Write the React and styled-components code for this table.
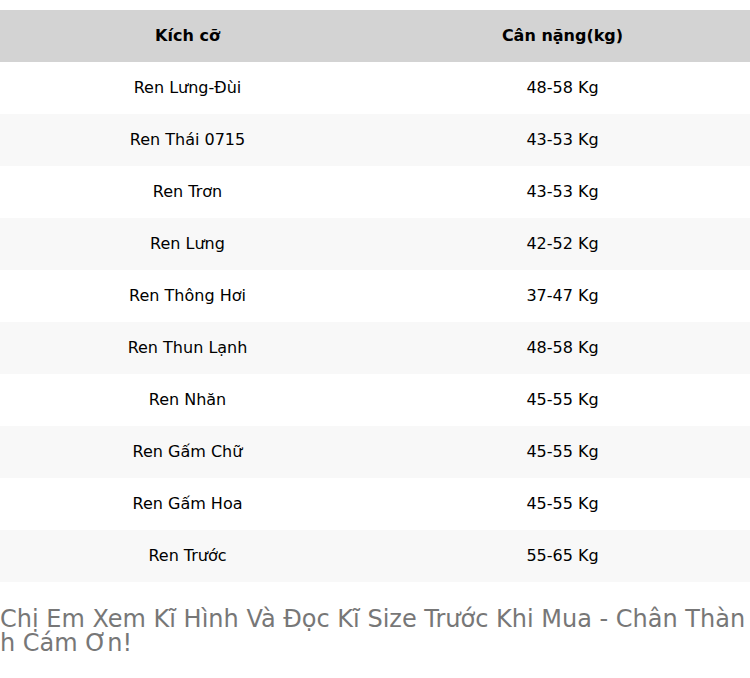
import React from 'react'
import styled, { createGlobalStyle } from 'styled-components'

const GlobalStyle = createGlobalStyle`
  html, body {
    margin: 0;
    padding: 0;
    background: #fff;
  }
  body {
    font-family: "DejaVu Sans", Verdana, sans-serif;
  }
`

const Page = styled.div`
  padding-top: 10px;
  width: 750px;
`

const SizeTable = styled.table`
  width: 100%;
  border-collapse: collapse;
  table-layout: fixed;
  font-family: "DejaVu Sans", Verdana, sans-serif;
  font-size: 16px;
  line-height: 18px;
  color: #000;
`

const HeadCell = styled.th`
  background: #d3d3d3;
  height: 51px;
  padding: 0 0 1px;
  font-weight: bold;
  text-align: center;
`

const Row = styled.tr`
  background: ${p => (p.$striped ? '#f8f8f8' : '#fff')};
`

const Cell = styled.td`
  height: 51px;
  padding: 0 0 1px;
  text-align: center;
`

const Note = styled.p`
  margin: 25px 0 0;
  font-family: "DejaVu Sans", sans-serif;
  font-size: 24px;
  line-height: 24px;
  color: #777;
  word-break: break-all;
`

const rows = [
  ['Ren Lưng-Đùi', '48-58 Kg'],
  ['Ren Thái 0715', '43-53 Kg'],
  ['Ren Trơn', '43-53 Kg'],
  ['Ren Lưng', '42-52 Kg'],
  ['Ren Thông Hơi', '37-47 Kg'],
  ['Ren Thun Lạnh', '48-58 Kg'],
  ['Ren Nhăn', '45-55 Kg'],
  ['Ren Gấm Chữ', '45-55 Kg'],
  ['Ren Gấm Hoa', '45-55 Kg'],
  ['Ren Trước', '55-65 Kg'],
]

export default function App() {
  return (
    <>
      <GlobalStyle />
      <Page>
        <SizeTable>
          <thead>
            <tr>
              <HeadCell>Kích cỡ</HeadCell>
              <HeadCell>Cân nặng(kg)</HeadCell>
            </tr>
          </thead>
          <tbody>
            {rows.map(([name, weight], i) => (
              <Row key={name} $striped={i % 2 === 1}>
                <Cell>{name}</Cell>
                <Cell>{weight}</Cell>
              </Row>
            ))}
          </tbody>
        </SizeTable>
        <Note>Chị Em Xem Kĩ Hình Và Đọc Kĩ Size Trước Khi Mua - Chân Thành Cám Ơn!</Note>
      </Page>
    </>
  )
}
